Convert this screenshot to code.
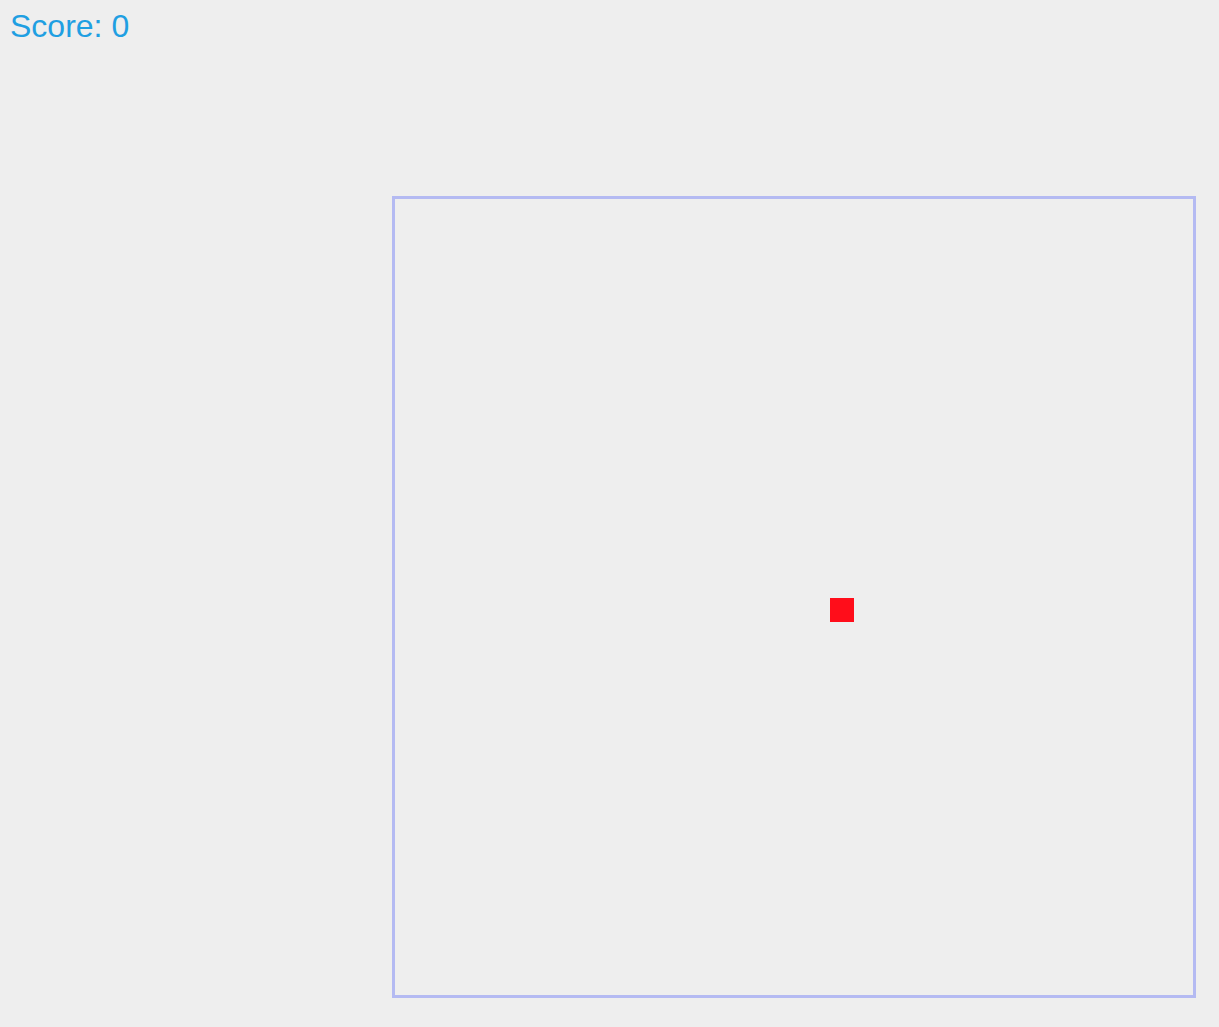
import React from 'react';

const App = () => {
    return (
        <div className="min-h-[1027px] w-full bg-[#eeeeee] font-['Liberation_Sans',Arial,sans-serif]">
            {/* score */}
            <div className="pl-[10px] pt-[7px] text-[32px] leading-[38px] text-[#1f9fe2]">Score: 0</div>

            {/* board */}
            <div className="ml-[392px] mt-[151px] relative h-[802px] w-[804px] border-[3px] border-[#b4baf2]">
                <div className="absolute left-[435px] top-[399px] h-[24px] w-[24px] bg-[#ff0d1a]" />
            </div>
        </div>
    );
};

export default App;
